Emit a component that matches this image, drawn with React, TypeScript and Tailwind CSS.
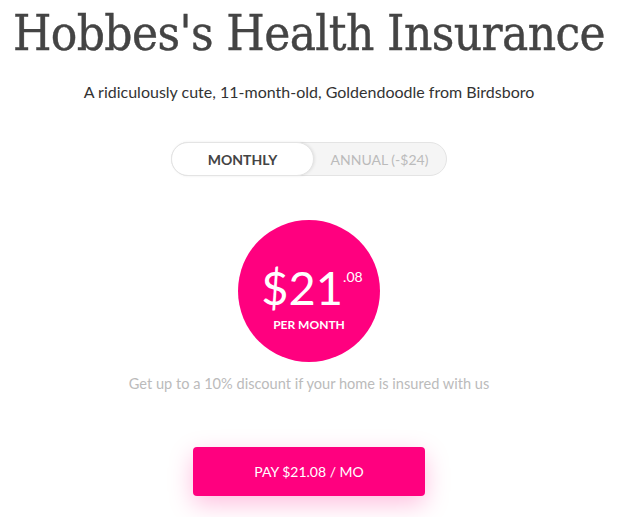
export default function App(): JSX.Element {
  return (
    <div className="flex min-h-screen flex-col items-center bg-white font-['Lato',sans-serif]">
      <h1 className="mt-[4px] whitespace-nowrap font-['DejaVu_Serif_Condensed','DejaVu_Serif',serif] text-[49px] leading-[60px] tracking-[-0.6px] text-[#444] [font-stretch:condensed] [-webkit-text-stroke:0.4px_#444]">
        Hobbes's Health Insurance
      </h1>
      <p className="mt-[18px] text-[16px] leading-[20px] text-[#333]">
        A ridiculously cute, 11-month-old, Goldendoodle from Birdsboro
      </p>

      <div className="mt-[40px] flex h-[34px] w-[276px] rounded-full border border-[#e4e4e4] bg-[#f5f5f5]">
        <button className="-m-px flex h-[34px] w-[143px] items-center justify-center rounded-full border border-[#e4e4e4] bg-white text-[14px] font-bold text-[#444] shadow-[1px_0_3px_rgba(0,0,0,0.08)]">
          MONTHLY
        </button>
        <button className="flex flex-1 items-center justify-center text-[14px] text-[#bbb]">
          ANNUAL (-$24)
        </button>
      </div>

      <div className="mt-[44px] flex h-[142px] w-[142px] flex-col items-center justify-center rounded-full bg-[#ff007f] text-white">
        <div className="mt-[12px] flex items-start pl-[6px]">
          <span className="text-[47px] leading-[50px]">$21</span>
          <span className="ml-0 mt-[8px] text-[14px] leading-[14px]">.08</span>
        </div>
        <span className="mt-[6px] text-[12px] font-bold leading-[14px]">PER MONTH</span>
      </div>

      <p className="mt-[13px] text-[14.6px] leading-[18px] text-[#bbb]">
        Get up to a 10% discount if your home is insured with us
      </p>

      <button className="mt-[54px] h-[49px] w-[232px] rounded-[4px] bg-[#ff007f] text-[14px] text-white shadow-[0_8px_24px_rgba(255,0,127,0.25)]">
        PAY $21.08 / MO
      </button>
    </div>
  );
}
